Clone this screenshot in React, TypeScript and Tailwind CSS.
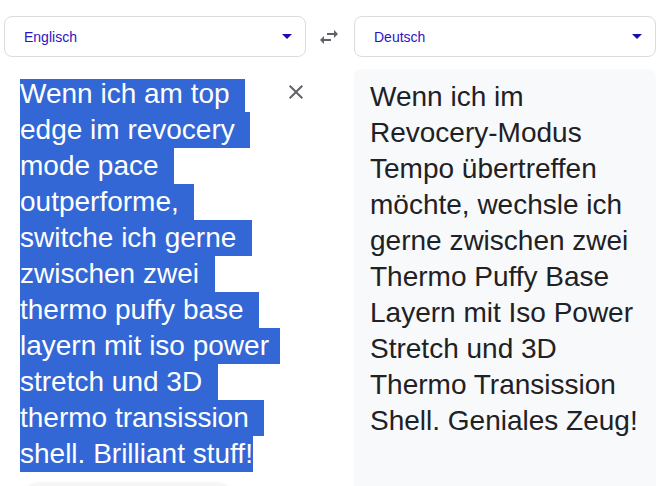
import React from "react";

const sourceLines = [
  { text: "Wenn ich am top", w: "w-[225px]" },
  { text: "edge im revocery", w: "w-[230px]" },
  { text: "mode pace", w: "w-[154px]" },
  { text: "outperforme,", w: "w-[174px]" },
  { text: "switche ich gerne", w: "w-[232px]" },
  { text: "zwischen zwei", w: "w-[195px]" },
  { text: "thermo puffy base", w: "w-[239px]" },
  { text: "layern mit iso power", w: "w-[260px]" },
  { text: "stretch und 3D", w: "w-[198px]" },
  { text: "thermo transission", w: "w-[244px]" },
  { text: "shell. Brilliant stuff!", w: "w-[233px]" },
];

const targetLines = [
  "Wenn ich im",
  "Revocery-Modus",
  "Tempo übertreffen",
  "möchte, wechsle ich",
  "gerne zwischen zwei",
  "Thermo Puffy Base",
  "Layern mit Iso Power",
  "Stretch und 3D",
  "Thermo Transission",
  "Shell. Geniales Zeug!",
];

const Caret = () => (
  <svg width="10" height="5" viewBox="0 0 10 5" className="shrink-0">
    <path d="M0 0h10L5 5z" fill="#1a0dab" />
  </svg>
);

const LangSelect: React.FC<{ label: string }> = ({ label }) => (
  <div className="flex h-[41px] items-center justify-between rounded-lg border border-[#dadce0] bg-white pl-[19px] pr-[13px]">
    <span className="pt-[1px] text-[14px] text-[#2b14c2]">{label}</span>
    <Caret />
  </div>
);

export default function App() {
  return (
    <div className="h-[486px] w-[666px] overflow-hidden bg-white font-['Liberation_Sans',Arial,sans-serif]">
      {/* Language bar */}
      <div className="grid grid-cols-[302px_48px_302px] pl-1 pt-4">
        <LangSelect label="Englisch" />
        <div className="flex items-center justify-center">
          <svg width="24" height="24" viewBox="0 0 24 24" className="mr-[2px]">
            <path
              d="M6.99 11L3 15l3.99 4v-3H14v-2H6.99v-3zM21 9l-3.99-4v3H10v2h7.01v3L21 9z"
              fill="#5f6368"
            />
          </svg>
        </div>
        <LangSelect label="Deutsch" />
      </div>

      {/* Text panels */}
      <div className="mt-3 grid grid-cols-[302px_48px_302px] pl-1">
        <div className="flex flex-col">
          <div className="flex items-start pl-4 pt-[10px]">
            <div className="min-w-0 flex-1 text-[28px] text-white">
              {sourceLines.map((l, i) => (
                <div
                  key={i}
                  className={`${l.w} whitespace-nowrap bg-[#3367d6] ${
                    i === 0 ? "h-[33px] leading-[30px]" : "h-9 leading-9"
                  }`}
                >
                  {l.text}
                </div>
              ))}
            </div>
            <button className="-mr-[2px] mt-[1px] flex h-6 w-6 shrink-0 items-center justify-center">
              <svg width="24" height="24" viewBox="0 0 24 24">
                <path
                  d="M19 6.41L17.59 5 12 10.59 6.41 5 5 6.41 10.59 12 5 17.59 6.41 19 12 13.41 17.59 19 19 17.59 13.41 12z"
                  fill="#5f6368"
                />
              </svg>
            </button>
          </div>
          <div className="ml-[19px] mt-[10px] h-10 w-[210px] rounded-2xl bg-[#f6f6f6]" />
        </div>
        <div />
        <div className="h-[440px] rounded-lg bg-[#f8f9fa] px-4 pt-[10px]">
          <div className="text-[28px] leading-9 text-[#202124]">
            {targetLines.map((l, i) => (
              <div key={i} className="whitespace-nowrap">
                {l}
              </div>
            ))}
          </div>
        </div>
      </div>
    </div>
  );
}
